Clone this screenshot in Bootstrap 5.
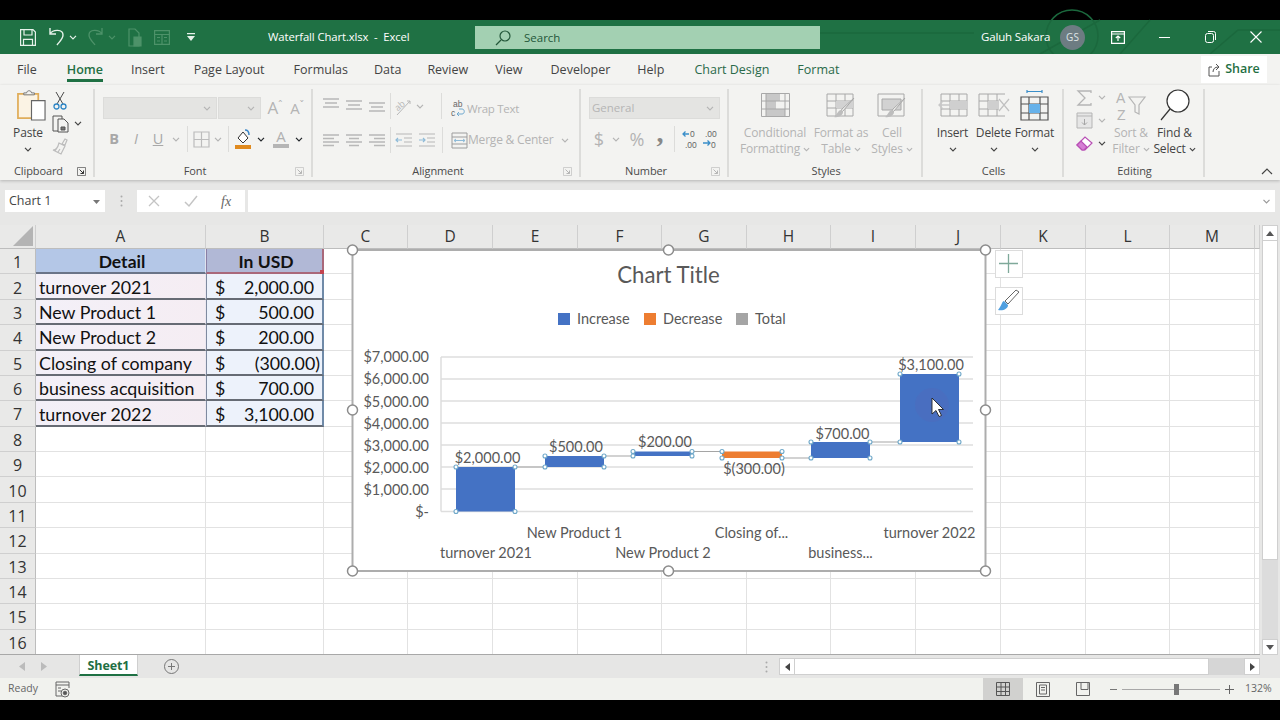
<!DOCTYPE html>
<html lang="en">
<head>
<meta charset="UTF-8">
<title>Waterfall Chart.xlsx - Excel</title>
<meta name="viewport" content="width=device-width, initial-scale=1">
<link href="https://cdn.jsdelivr.net/npm/bootstrap@5.3.0/dist/css/bootstrap.min.css" rel="stylesheet">
<style>
  html, body { height: 720px; overflow: hidden; background: #000; }
  body { font-family: "Open Sans", "Noto Sans", sans-serif; font-size: 12px; color: #444; }
  svg { display: block; flex: none; overflow: visible; }
  .app { padding-top: 20px; height: 700px; width: 1280px; }

  /* title bar */
  .tbar { height: 34px; background: #1f7144; color: #fff; position: relative; flex: none; }
  .tbar > div { flex: none; }
  .tbar-bg { position: absolute; left: 820px; top: 0; }
  .qat { width: 268px; padding-left: 20px; }
  .q-undo { margin-left: 13px; } .q-c1 { margin-left: 5px; } .q-redo { margin-left: 11px; } .q-c2 { margin-left: 5px; }
  .q-doc { margin-left: 12px; } .q-tbl { margin-left: 12px; } .q-drop { margin-left: 16px; }
  .doc-title { width: 207px; font-size: 11.3px; letter-spacing: -.1px; white-space: pre; }
  .searchbox { width: 345px; height: 23px; margin-top: 1px; background: #a3d0b2; color: #24573a; padding-left: 20px; gap: 13px; font-size: 11.5px; }
  .user { margin-left: 161px; font-size: 11.5px; letter-spacing: -.15px; width: 79px; white-space: nowrap; position: relative; }
  .avatar { width: 25px; height: 25px; border-radius: 50%; background: #6d7c82; color: #dfe5e6; font-size: 10px; position: relative; margin-right: 10px; }
  .winbtn { width: 46px; position: relative; }

  /* tabs */
  .tabrow { height: 31px; background: #f3f3f1; color: #444; font-size: 12.5px; position: relative; flex: none; padding-left: 17px; }
  .tab { position: relative; white-space: nowrap; line-height: 31px; }
  .tab-on { font-weight: 600; color: #1f6f43; }
  .tab-on::after { content: ""; position: absolute; left: 0; right: 0; bottom: 3px; height: 3px; background: #1f7144; }
  .tab-ctx { color: #2a6a4a; }
  .tab-file { margin-right: 30px; } .tab-home { margin-right: 28px; } .tab-ins { margin-right: 29px; } .tab-pl { margin-right: 29px; }
  .tab-fm { margin-right: 26px; } .tab-da { margin-right: 26px; } .tab-re { margin-right: 27px; }
  .tab-vi { margin-right: 28px; } .tab-de { margin-right: 27px; } .tab-he { margin-right: 30px; } .tab-cd { margin-right: 28px; }
  .sharebtn { position: absolute; right: 13px; top: 2px; width: 66px; height: 27px; background: #fff; color: #1f6f43; font-weight: 600; gap: 4px; font-size: 12.5px; }

  /* ribbon */
  .ribbon { height: 95px; background: #f3f3f1; box-shadow: 0 1px 3px rgba(0,0,0,.22); position: relative; z-index: 2; flex: none; }
  .grp { height: 95px; position: relative; flex: none; }
  .grp::after { content: ""; position: absolute; right: 0; top: 4px; bottom: 3px; width: 2px; background: #dcdcda; }
  .grp-body { height: 79px; }
  .grp-label { height: 15px; font-size: 11px; color: #4a4a4a; line-height: 14px; letter-spacing: -.1px; }
  .launch { width: 18px; }
  .g-clip { width: 95px; } .g-font { width: 218px; } .g-align { width: 268px; } .g-num { width: 148px; }
  .g-style { width: 194px; } .g-cells { width: 141px; } .g-edit { width: 141px; }
  .rrow { display: flex; align-items: center; }
  .cell-i { display: flex; align-items: center; justify-content: center; flex: none; height: 100%; }
  .w10 { width: 10px; } .w12 { width: 12px; } .w14 { width: 14px; } .w18 { width: 18px; } .w20 { width: 20px; } .w22 { width: 22px; } .w24 { width: 24px; } .w28 { width: 28px; }
  .vsep { width: 1px; height: 26px; background: #dcdcda; flex: none; margin: 0 2px; }
  .combo { height: 22px; background: #e4e4e2; border: 1px solid #dcdcda; flex: none; padding-right: 5px; color: #b5b5b5; }
  .c-font { width: 114px; margin-right: 1px; } .c-size { width: 43px; margin-right: 1px; } .c-num { width: 131px; padding-left: 2px; font-size: 11.5px; }
  .dis { color: #b4b4b4; }
  .bigbtn { display: flex; flex-direction: column; align-items: center; flex: none; text-align: center; line-height: 16px; white-space: nowrap; letter-spacing: -.15px; }
  .bigbtn .ico { height: 40px; display: flex; align-items: center; justify-content: center; }
  .bigbtn .lh { height: 16px; display: flex; align-items: center; justify-content: center; gap: 3px; }
  .b-paste { width: 42px; margin-left: 7px; }
  .paste-ico { margin-left: 6px; }
  .b-cond { width: 72px; } .b-tbl { width: 60px; } .b-cell { width: 42px; }
  .b-cellop { width: 41px; } .b-sort { width: 46px; } .b-find { width: 41px; }
  .pad-s { padding-left: 10px; } .pad-c { padding-left: 9px; } .pad-e { padding-left: 10px; }
  .small-col { width: 34px; flex: none; }
  .small-col .rrow { height: 23px; }
  .clip-col { margin-left: 1px; padding-top: 4px; }
  .font-body { padding: 12px 0 0 8px; }
  .r-top { height: 22px; } .r-bot { height: 26px; margin-top: 7px; }
  .fs-a { font-size: 17px; margin-left: 2px; } .fs-b { font-size: 15px; }
  .fs-a sup, .fs-b sup { font-size: 10px; top: -.35em; }
  .bi-t { font-size: 14.5px; color: #a8a8a8; }
  .sep-b { margin: 0 3px 0 4px; } .sep-f { margin: 0 3px; } .w-col { margin-left: 2px; }
  .align-body { padding: 8px 0 0 7px; }
  .a-row { height: 26px; margin-bottom: 8px; }
  .va-t svg { margin-top: -2px; } .va-m svg { margin-top: 2px; } .va-b svg { margin-top: 6px; }
  .sep-a1 { margin: 0 2px 0 16px; } .sep-a2 { margin: 0 2px 0 3px; }
  .a-ico { margin-left: 5px; }
  .a-wrapico { margin-top: 4px; }
  .a-text { letter-spacing: -.1px; white-space: nowrap; }
  .a-wrap { font-size: 11.5px; letter-spacing: -.3px; margin-top: 5px; }
  .a-merge { letter-spacing: -.2px; }
  .a-mchev { margin-left: 5px; }
  .num-body { padding: 12px 0 0 8px; }
  .n-row { height: 26px; margin-top: 7px; }
  .n-sym { font-size: 18px; }
  .n-comma { font-family: "Liberation Serif", serif; font-size: 28px; font-weight: 700; color: #888; margin-top: -12px; }
  .sep-n { margin: 0 5px; }
  .dec-t { font-family: "Liberation Sans", sans-serif; font-size: 8.5px; fill: #666; }
  .sort-t { font-family: "Liberation Sans", sans-serif; font-size: 14px; fill: #b5b5b5; }
  .edit-col { width: 34px; }
  .edit-col .rrow:first-child { margin-top: 1px; }
  .collapse-box { padding: 0 7px 5px 0; }

  /* formula bar */
  .fbar { height: 45px; background: #e7e7e6; padding: 10px 5px 0; flex: none; }
  .fbox { height: 22px; background: #fff; flex: none; }
  .f-name { width: 100px; padding: 1px 5px 0 4px; font-size: 12.5px; color: #444; }
  .f-dots { width: 32px; height: 22px; color: #999; }
  .f-fx { width: 108px; }
  .f-input { flex: 1; margin-left: 3px; justify-content: flex-end; padding-right: 4px; }
  .fx-x { margin-left: 11px; } .fx-c { margin-left: 24px; }
  .fx-f { margin-left: 23px; font-family: "Liberation Serif", serif; font-size: 14px; color: #666; }

  /* sheet */
  .sheetrow { height: 430px; flex: none; }
  .sheetpane { width: 1260px; height: 430px; position: relative; overflow: hidden; background: #fff; border-bottom: 1px solid #a8a8a8; }
  .cellgrid { display: grid; grid-template-columns: 36px 170px 118px 84px 85px 85px 84px 85px 84px 85px 85px 85px 84px 85px 5px; grid-template-rows: 24px repeat(16, 25.375px); font-family: Lato, "Open Sans", sans-serif; }
  .gc { border-right: 1px solid #e2e2e2; border-bottom: 1px solid #e2e2e2; font-size: 17.8px; color: #111; display: flex; align-items: center; white-space: nowrap; padding: 2px 0 0 3px; min-width: 0; }
  .ch { background: #e9e9e8; font-family: "Open Sans", sans-serif; font-size: 15.5px; color: #333; justify-content: center; padding: 0; border-right-color: #cfcfcf; border-bottom-color: #bdbdbd; }
  .rh { background: #e9e9e8; font-family: "Open Sans", sans-serif; font-size: 16px; color: #333; justify-content: center; padding: 2px 0 0; border-right-color: #bdbdbd; border-bottom-color: #cfcfcf; }
  .corner { background: #e9e9e8; position: relative; border-right-color: #cfcfcf; border-bottom-color: #bdbdbd; padding: 0; }
  .corner::after { content: ""; position: absolute; right: 2px; bottom: 2px; border-style: solid; border-width: 0 0 20px 20px; border-color: transparent transparent #b4b4b4 transparent; }
  .hd-a { background: #b4c7e7; font-weight: 700; font-size: 17.5px; justify-content: center; border-bottom: 2px solid #6a7488; border-right: 1px solid #dfe3ee; }
  .hd-b { background: #b1b8d6; font-weight: 700; font-size: 17.5px; justify-content: center; border-bottom: 2px solid #a9687a; border-right: 2px solid #a9687a; border-left: 1px solid #8a7fa5; position: relative; }
  .hd-b::after { content: ""; position: absolute; right: -2px; bottom: -2px; width: 4px; height: 4px; background: #c2434f; }
  .da { background: linear-gradient(90deg, #f3f0f8, #f5edf3); border-bottom: 2px solid #666b74; border-right: 1px solid #ece8f0; }
  .db { background: #edf2fb; border-bottom: 2px solid #666b74; border-right: 2px solid #6f8aa8; border-left: 1px solid #7f8aa0; justify-content: space-between; padding: 2px 8px 0; }
  .neg { margin-right: -6px; }
  .chartlay { position: absolute; left: 340px; top: 15px; }
  .chartlay text { font-family: Lato, "Open Sans", sans-serif; fill: #595959; }

  .vscroll { width: 20px; height: 430px; background: #e7e7e6; padding: 0 2px; }
  .sb-btn { background: #fff; border: 1px solid #cfcfcf; height: 16px; flex: none; }
  .vthumb { height: 319px; background: #fff; border: 1px solid #cfcfcf; border-top: 0; flex: none; }
  .vtrack { flex: 1; background: #dcdcdc; }

  /* sheet tabs */
  .tabbar { height: 23px; background: #e6e6e5; position: relative; flex: none; }
  .tabnav { width: 79px; padding-left: 19px; gap: 16px; flex: none; }
  .sheettab { width: 59px; height: 21px; padding-top: 3px; background: #fff; color: #1f6f43; font-weight: 700; font-size: 12.5px; border-bottom: 2px solid #1f7144; border-left: 1px solid #cfcfcf; border-right: 1px solid #cfcfcf; letter-spacing: -.1px; flex: none; }
  .addsheet { margin-left: 26px; }
  .hscroll { margin-left: auto; width: 520px; padding-right: 20px; flex: none; }
  .h-grip { width: 19px; color: #999; flex: none; justify-content: flex-start; padding-left: 5px; }
  .h-btn { width: 16px; height: 17px; background: #fff; border: 1px solid #cfcfcf; flex: none; }
  .h-thumb { width: 414px; height: 17px; background: #fff; border: 1px solid #cfcfcf; border-left: 0; flex: none; }
  .h-track { width: 35px; height: 17px; background: #d6d6d6; flex: none; }

  /* status bar */
  .statusbar { height: 22px; background: #f1f2ee; font-size: 10.5px; color: #666; flex: none; }
  .st-left { padding-left: 8px; gap: 17px; }
  .vbtn { width: 40px; height: 22px; flex: none; }
  .vbtn-on { background: #d1d1cf; }
  .zoombar { margin-left: 7px; padding-right: 7px; }
  .zslider { width: 98px; height: 1px; background: #a8a8a8; position: relative; margin: 0 5px; }
  .zslider::before { content: ""; position: absolute; left: 52px; top: -5px; width: 5px; height: 11px; background: #777; }
  .zpct { margin-left: 11px; width: 28px; white-space: nowrap; }
</style>
</head>
<body>

<svg width="0" height="0" class="position-absolute">
  <defs>
    <symbol id="chev" viewBox="0 0 8 5"><path d="M1 .8l3 3 3-3" fill="none" stroke="currentColor" stroke-width="1.2"/></symbol>
    <symbol id="launcher" viewBox="0 0 9 9"><path d="M.5 .5h8v8h-8z" fill="none" stroke="currentColor" stroke-width=".9" opacity=".65"/><path d="M2.5 2.5l4 4M3.5 6.5h3v-3" fill="none" stroke="currentColor"/></symbol>
    <symbol id="lines3" viewBox="0 0 18 18"><path d="M1 3h16M3 7h12M1 11h16" fill="none" stroke="currentColor" stroke-width="1.4"/></symbol>
  </defs>
</svg>

<div class="app d-flex flex-column">

  <!-- Title bar -->
  <div class="tbar d-flex align-items-center">
    <svg class="tbar-bg" width="460" height="34" viewBox="0 0 460 34"><g fill="none" stroke="#1b683d" stroke-width="1.5"><path d="M0 13h146l8 0M300 34l30-34M390 34l28-24h42M280 0l-60 34"/><circle cx="252" cy="16" r="26"/></g></svg>
    <div class="qat d-flex align-items-center position-relative">
      <svg width="16" height="17" viewBox="0 0 16 17" fill="none" stroke="#e6f2ea" stroke-width="1.2"><path d="M.6 .6h12.400l2.400 2.400v13.400H.6zM4 .6v5.400h8V.6M3.500 16.400v-6h9v6"/></svg>
      <svg class="q-undo" width="15" height="20" viewBox="0 0 15 20" fill="none" stroke="#e6f2ea" stroke-width="1.4"><path d="M1 1v6h6M1 7c3-5 13-5 13 1 0 4-4 7-6 10"/></svg>
      <svg class="q-c1" width="8" height="5" color="#e6f2ea"><use href="#chev"/></svg>
      <svg class="q-redo" width="15" height="20" viewBox="0 0 15 20" fill="none" stroke="#4d9269" stroke-width="1.3"><path d="M14 1v6H8M14 7C11 2 1 2 1 8c0 4 4 7 6 10"/></svg>
      <svg class="q-c2" width="8" height="5" color="#4d9269"><use href="#chev"/></svg>
      <svg class="q-doc" width="14" height="19" viewBox="0 0 14 19" fill="none" stroke="#4d9269" stroke-width="1.2"><path d="M1 1h6l4 4v13H1z"/><path d="M6 9h7v9H6z" fill="#4d9269"/></svg>
      <svg class="q-tbl" width="16" height="15" viewBox="0 0 16 15" fill="none" stroke="#4d9269" stroke-width="1.2"><path d="M.6 .6h14.800v13.800H.6zM.6 4.500h14.800M8 4.500v10M3 7.500h3M10 7.500h3M3 11h3M10 11h3"/></svg>
      <svg class="q-drop" width="10" height="10" viewBox="0 0 10 10" fill="#e6f2ea"><path d="M1 1h8v1.200H1zM1 4h8L5 9z"/></svg>
    </div>
    <div class="doc-title position-relative">Waterfall Chart.xlsx  -  Excel</div>
    <div class="searchbox d-flex align-items-center position-relative">
      <svg width="16" height="16" viewBox="0 0 16 16" fill="none" stroke="#24573a" stroke-width="1.2"><circle cx="10" cy="6" r="5"/><path d="M6 10l-5 5"/></svg>
      <span>Search</span>
    </div>
    <div class="user">Galuh Sakara</div>
    <div class="avatar d-flex align-items-center justify-content-center">GS</div>
    <div class="winbtn d-flex justify-content-center"><svg width="14" height="13" viewBox="0 0 14 13" fill="none" stroke="#fff" stroke-width="1.2"><path d="M.6 .6h12.800v11.800H.6zM.6 3h12.800M7 10V5M4.800 7L7 5l2.200 2"/></svg></div>
    <div class="winbtn d-flex justify-content-center"><svg width="11" height="11" viewBox="0 0 11 11" stroke="#fff"><path d="M0 5.500h11"/></svg></div>
    <div class="winbtn d-flex justify-content-center"><svg width="11" height="12" viewBox="0 0 11 12" fill="none" stroke="#fff"><rect x=".5" y="2.500" width="8" height="9" rx="2"/><path d="M3 .5h5.500a2 2 0 0 1 2 2V9"/></svg></div>
    <div class="winbtn d-flex justify-content-center"><svg width="12" height="12" viewBox="0 0 12 12" stroke="#fff" stroke-width="1.100"><path d="M.5 .5l11 11M11.500 .5l-11 11"/></svg></div>
  </div>

  <!-- Tabs -->
  <div class="tabrow d-flex">
    <span class="tab tab-file">File</span>
    <span class="tab tab-on tab-home">Home</span>
    <span class="tab tab-ins">Insert</span>
    <span class="tab tab-pl">Page Layout</span>
    <span class="tab tab-fm">Formulas</span>
    <span class="tab tab-da">Data</span>
    <span class="tab tab-re">Review</span>
    <span class="tab tab-vi">View</span>
    <span class="tab tab-de">Developer</span>
    <span class="tab tab-he">Help</span>
    <span class="tab tab-ctx tab-cd">Chart Design</span>
    <span class="tab tab-ctx tab-fo">Format</span>
    <div class="sharebtn d-flex align-items-center justify-content-center">
      <svg width="13" height="14" viewBox="0 0 13 14" fill="none" stroke="#555" stroke-width="1"><path d="M4 4H1v9h10V8M5 9c0-3 2-5 5-5M8 1l3 3-3 3"/></svg>
      <span>Share</span>
    </div>
  </div>

  <!-- Ribbon -->
  <div class="ribbon d-flex">

    <div class="grp g-clip d-flex flex-column">
      <div class="grp-body d-flex">
        <div class="bigbtn b-paste">
          <div class="ico"><svg class="paste-ico" width="29" height="30" viewBox="0 0 30 31" fill="none"><path d="M1 4h21v25H1z" fill="#fbf3e4" stroke="#e0ad5a" stroke-width="1.800"/><path d="M7 5V3h3c0-3 5-3 5 0h3v2z" fill="#f3f3f1" stroke="#777"/><path d="M15 11h14v20H15z" fill="#fff" stroke="#666" stroke-width="1.200"/></svg></div>
          <div class="lh">Paste</div>
          <div class="lh"><svg width="8" height="5"><use href="#chev"/></svg></div>
        </div>
        <div class="small-col clip-col">
          <div class="rrow"><span class="cell-i w20"><svg width="14" height="19" viewBox="0 0 14 19" fill="none" stroke="#4a4a4a"><path d="M3 1l7 12M11 1L4 13"/><circle cx="3.500" cy="15.500" r="2.500" stroke="#2f86c5" stroke-width="1.300"/><circle cx="10.500" cy="15.500" r="2.500" stroke="#2f86c5" stroke-width="1.300"/></svg></span></div>
          <div class="rrow"><span class="cell-i w20"><svg width="17" height="18" viewBox="0 0 17 18" fill="#f3f3f1" stroke="#555"><path d="M1 1h9v15H1z"/><path d="M6 4h6l4 4v9H6z"/><path d="M9 12h4v3H9z" fill="#777"/></svg></span><svg class="ms-1" width="8" height="5"><use href="#chev"/></svg></div>
          <div class="rrow"><span class="cell-i w20"><svg width="16" height="17" viewBox="0 0 16 17" fill="none" stroke="#bcbcbc" stroke-width="1.200"><path d="M10 6l3-5 2 1-2 5zM7 5l6 3-4 8-8-4c3 0 5-3 6-7zM5 10l-2 3M8 11l-2 3"/></svg></span></div>
        </div>
      </div>
      <div class="grp-label d-flex"><span class="flex-grow-1 text-center">Clipboard</span><span class="launch d-flex align-items-center"><svg width="9" height="9" color="#333"><use href="#launcher"/></svg></span></div>
    </div>

    <div class="grp g-font d-flex flex-column">
      <div class="grp-body font-body">
        <div class="rrow r-top">
          <div class="combo c-font d-flex align-items-center justify-content-end"><svg width="8" height="5"><use href="#chev"/></svg></div>
          <div class="combo c-size d-flex align-items-center justify-content-end"><svg width="8" height="5"><use href="#chev"/></svg></div>
          <span class="cell-i w22 fs-a dis">A<sup>ˆ</sup></span>
          <span class="cell-i w22 fs-b dis">A<sup>ˇ</sup></span>
        </div>
        <div class="rrow r-bot dis">
          <span class="cell-i w22 bi-t fw-bold">B</span>
          <span class="cell-i w22 bi-t fst-italic">I</span>
          <span class="cell-i w22 bi-t text-decoration-underline">U</span>
          <span class="cell-i w14"><svg width="8" height="5"><use href="#chev"/></svg></span>
          <span class="vsep sep-b"></span>
          <span class="cell-i w20"><svg width="17" height="17" viewBox="0 0 17 17" fill="none" stroke="#bcbcbc" stroke-width="1.200"><path d="M1 1h15v15H1zM8.500 1v15M1 8.500h15"/></svg></span>
          <span class="cell-i w14"><svg width="8" height="5"><use href="#chev"/></svg></span>
          <span class="vsep sep-f"></span>
          <span class="cell-i w22"><svg width="20" height="22" viewBox="0 0 20 22" fill="none" stroke="#333"><path d="M5 10l5-6 5 6-5 5z" fill="#fff"/><path d="M12 2c3 0 4 2 4 5" stroke="#3a86c8" stroke-width="1.500"/><path d="M2 17h16v4H2z" fill="#e08a1e" stroke="none"/></svg></span>
          <span class="cell-i w14 text-dark"><svg width="8" height="5"><use href="#chev"/></svg></span>
          <span class="cell-i w22 w-col"><svg width="18" height="20" viewBox="0 0 18 20"><text x="9" y="13" font-size="15" text-anchor="middle" fill="#b0b0b0" font-family="Open Sans">A</text><path d="M1 15h16v4H1z" fill="#b5b5b5"/></svg></span>
          <span class="cell-i w14 text-dark"><svg width="8" height="5"><use href="#chev"/></svg></span>
        </div>
      </div>
      <div class="grp-label d-flex"><span class="flex-grow-1 text-center">Font</span><span class="launch d-flex align-items-center"><svg width="9" height="9" color="#b5b5b5"><use href="#launcher"/></svg></span></div>
    </div>

    <div class="grp g-align d-flex flex-column">
      <div class="grp-body align-body">
        <div class="rrow a-row dis">
          <span class="cell-i w22 va-t"><svg width="18" height="18" color="#b8b8b8"><use href="#lines3"/></svg></span>
          <span class="cell-i w24 va-m"><svg width="18" height="18" color="#b8b8b8"><use href="#lines3"/></svg></span>
          <span class="cell-i w22 va-b"><svg width="18" height="18" color="#b8b8b8"><use href="#lines3"/></svg></span>
          <span class="vsep"></span>
          <span class="cell-i w22"><svg width="20" height="19" viewBox="0 0 20 19" fill="none" stroke="#b8b8b8"><text x="1" y="11" font-size="9" fill="#b8b8b8" stroke="none" font-family="Open Sans" transform="rotate(-40 7 9)">ab</text><path d="M3 18L16 4M13 4h3v3"/></svg></span>
          <span class="cell-i w10"><svg width="8" height="5"><use href="#chev"/></svg></span>
          <span class="vsep sep-a1"></span>
          <span class="cell-i w18 a-ico a-wrapico"><svg width="16" height="19" viewBox="0 0 16 19"><text x="3" y="8" class="dec-t" fill="#777">ab</text><text x="1" y="17" class="dec-t" fill="#777">c</text><path d="M7 15h5c3 0 3-5 0-5h-3M7 15l2-2M7 15l2 2" fill="none" stroke="#6fa9cf"/></svg></span>
          <span class="a-text a-wrap">Wrap Text</span>
        </div>
        <div class="rrow a-row dis">
          <span class="cell-i w22"><svg width="18" height="14" viewBox="0 0 18 14" stroke="#b8b8b8" stroke-width="1.300"><path d="M1 2h16M1 5.500h11M1 9h16M1 12.500h11"/></svg></span>
          <span class="cell-i w24"><svg width="18" height="14" viewBox="0 0 18 14" stroke="#b8b8b8" stroke-width="1.300"><path d="M1 2h16M4 5.500h10M1 9h16M4 12.500h10"/></svg></span>
          <span class="cell-i w22"><svg width="18" height="14" viewBox="0 0 18 14" stroke="#b8b8b8" stroke-width="1.300"><path d="M1 2h16M6 5.500h11M1 9h16M6 12.500h11"/></svg></span>
          <span class="vsep"></span>
          <span class="cell-i w22"><svg width="18" height="14" viewBox="0 0 18 14" fill="none" stroke="#b8b8b8" stroke-width="1.200"><path d="M1 1h16M9 5h8M9 9h8M1 13h16"/><path d="M7 7H1M3 5L1 7l2 2" stroke="#8fbbd8"/></svg></span>
          <span class="cell-i w24"><svg width="18" height="14" viewBox="0 0 18 14" fill="none" stroke="#b8b8b8" stroke-width="1.200"><path d="M1 1h16M9 5h8M9 9h8M1 13h16"/><path d="M1 7h6M5 5l2 2-2 2" stroke="#8fbbd8"/></svg></span>
          <span class="vsep sep-a2"></span>
          <span class="cell-i w18 a-ico"><svg width="17" height="17" viewBox="0 0 17 17" fill="none" stroke="#9d9d9d"><path d="M1 1h15v15H1zM1 5h15M1 12h15"/><path d="M3 8.500h11M5 7l-2 1.500L5 10M12 7l2 1.500-2 1.500" stroke="#8fbbd8"/></svg></span>
          <span class="a-text a-merge">Merge &amp; Center</span>
          <span class="cell-i w14 a-mchev"><svg width="8" height="5"><use href="#chev"/></svg></span>
        </div>
      </div>
      <div class="grp-label d-flex"><span class="flex-grow-1 text-center">Alignment</span><span class="launch d-flex align-items-center"><svg width="9" height="9" color="#b5b5b5"><use href="#launcher"/></svg></span></div>
    </div>

    <div class="grp g-num d-flex flex-column">
      <div class="grp-body num-body">
        <div class="combo c-num d-flex align-items-center justify-content-between"><span>General</span><svg width="8" height="5"><use href="#chev"/></svg></div>
        <div class="rrow n-row dis">
          <span class="cell-i w20 n-sym">$</span>
          <span class="cell-i w14"><svg width="8" height="5"><use href="#chev"/></svg></span>
          <span class="cell-i w28 n-sym">%</span>
          <span class="cell-i w18 n-comma">,</span>
          <span class="vsep sep-n"></span>
          <span class="cell-i w20"><svg width="16" height="20" viewBox="0 0 16 20"><text x="8" y="8" class="dec-t">0</text><text x="3" y="18.500" class="dec-t">.00</text><path d="M7 5H1M3.500 2.500L1 5l2.500 2.500" fill="none" stroke="#3a8ec9" stroke-width="1.300"/></svg></span>
          <span class="cell-i w20"><svg width="16" height="20" viewBox="0 0 16 20"><text x="3" y="8" class="dec-t">.00</text><text x="9" y="18.500" class="dec-t">0</text><path d="M1 14h7M5.500 11.500L8 14l-2.500 2.500" fill="none" stroke="#3a8ec9" stroke-width="1.300"/></svg></span>
        </div>
      </div>
      <div class="grp-label d-flex"><span class="flex-grow-1 text-center">Number</span><span class="launch d-flex align-items-center"><svg width="9" height="9" color="#b5b5b5"><use href="#launcher"/></svg></span></div>
    </div>

    <div class="grp g-style d-flex flex-column">
      <div class="grp-body d-flex pad-s dis">
        <div class="bigbtn b-cond">
          <div class="ico"><svg width="29" height="24" viewBox="0 0 29 24" fill="none" stroke="#a8a8a8"><path d="M.5 .5h28v23H.5z" fill="#f3f3f1"/><path d="M5 1h14v7h-14zM5 8h10v8H5zM5 16h19v7H5z" fill="#c8c8c8" stroke="none"/><path d="M.5 8h28M.5 16h28M5 .5v23M24 .5v23"/></svg></div>
          <div class="lh">Conditional</div>
          <div class="lh">Formatting<svg width="7" height="5"><use href="#chev"/></svg></div>
        </div>
        <div class="bigbtn b-tbl">
          <div class="ico"><svg width="30" height="25" viewBox="0 0 30 25" fill="none" stroke="#a8a8a8"><path d="M1 1h26v22H1zM1 8h26M1 15h26M10 1v22M19 1v22"/><path d="M10 8h17v7H10z" fill="#d2d2d2" stroke="none"/><path d="M28 5L17 18l-3 2 2-4z" fill="#f3f3f1"/><path d="M15 17c-3 0-4 5-7 7 5 1 9-2 9-5" fill="#bdbdbd" stroke="none"/></svg></div>
          <div class="lh">Format as</div>
          <div class="lh">Table<svg width="7" height="5"><use href="#chev"/></svg></div>
        </div>
        <div class="bigbtn b-cell">
          <div class="ico"><svg width="30" height="25" viewBox="0 0 30 25" fill="none" stroke="#a8a8a8"><path d="M1 1h26v22H1z"/><path d="M5 6h19v11H5z" fill="#d2d2d2"/><path d="M28 5L17 18l-3 2 2-4z" fill="#f3f3f1"/><path d="M15 17c-3 0-4 5-7 7 5 1 9-2 9-5" fill="#bdbdbd" stroke="none"/></svg></div>
          <div class="lh">Cell</div>
          <div class="lh">Styles<svg width="7" height="5"><use href="#chev"/></svg></div>
        </div>
      </div>
      <div class="grp-label text-center">Styles</div>
    </div>

    <div class="grp g-cells d-flex flex-column">
      <div class="grp-body d-flex pad-c">
        <div class="bigbtn b-cellop">
          <div class="ico"><svg width="32" height="24" viewBox="0 0 32 24" fill="none" stroke="#a8a8a8"><path d="M4 1h26v22H4zM4 8h26M4 16h26M13 1v22M22 1v22"/><path d="M13 8h18v8H13z" fill="#cfcfcf" stroke="none"/><path d="M13 12H2M6 8l-4 4 4 4" stroke="#c8c8c8" stroke-width="1.400"/></svg></div>
          <div class="lh">Insert</div>
          <div class="lh"><svg width="8" height="5"><use href="#chev"/></svg></div>
        </div>
        <div class="bigbtn b-cellop">
          <div class="ico"><svg width="32" height="24" viewBox="0 0 32 24" fill="none" stroke="#a8a8a8"><path d="M1 1h26M1 23h26M1 1v22M1 8h20M1 16h20M10 1v22M19 1v22"/><path d="M10 8h11v8H10z" fill="#cfcfcf" stroke="none"/><path d="M21 6l10 12M31 6L21 18" stroke="#c0c0c0" stroke-width="1.200"/></svg></div>
          <div class="lh">Delete</div>
          <div class="lh"><svg width="8" height="5"><use href="#chev"/></svg></div>
        </div>
        <div class="bigbtn b-cellop">
          <div class="ico"><svg width="29" height="31" viewBox="0 0 29 31" fill="none" stroke="#555" stroke-width="1.200"><path d="M7 1.500h15M7 0v3M22 0v3" stroke="#3a8ec9"/><path d="M1 7h27v23H1zM1 14h27M1 23h27M9 7v23M20 7v23"/><path d="M9 14h11v9H9z" fill="#67b2ea" stroke="none"/></svg></div>
          <div class="lh">Format</div>
          <div class="lh"><svg width="8" height="5"><use href="#chev"/></svg></div>
        </div>
      </div>
      <div class="grp-label text-center">Cells</div>
    </div>

    <div class="grp g-edit d-flex flex-column">
      <div class="grp-body d-flex pad-e">
        <div class="small-col edit-col">
          <div class="rrow"><span class="cell-i w20"><svg width="15" height="16" viewBox="0 0 15 16" fill="none" stroke="#b5b5b5" stroke-width="1.300"><path d="M14 3V1H1l7 7-7 7h13v-2"/></svg></span><span class="ms-1 dis"><svg width="8" height="5"><use href="#chev"/></svg></span></div>
          <div class="rrow"><span class="cell-i w20"><svg width="17" height="17" viewBox="0 0 17 17" fill="#e6e6e6" stroke="#b5b5b5"><path d="M1 1h15v15H1z"/><path d="M1 4h15" /><path d="M8.500 7v6M6 10.500l2.500 2.500 2.500-2.500" fill="none" stroke="#a5a5a5"/></svg></span><span class="ms-1 dis"><svg width="8" height="5"><use href="#chev"/></svg></span></div>
          <div class="rrow"><span class="cell-i w20"><svg width="17" height="15" viewBox="0 0 17 15" fill="none" stroke="#b84fb5" stroke-width="1.200"><path d="M1 9l8-8 7 6-7 7H6z" fill="#fff"/><path d="M1 9l4-4 6 6-3 3H6z" fill="#d57fd4"/></svg></span><span class="ms-1"><svg width="8" height="5"><use href="#chev"/></svg></span></div>
        </div>
        <div class="bigbtn b-sort dis">
          <div class="ico"><svg width="30" height="29" viewBox="0 0 30 29"><text x="0" y="12" class="sort-t">A</text><text x="1" y="28.500" class="sort-t">Z</text><path d="M13 6h16l-6 8v9l-4-2v-7z" fill="none" stroke="#b5b5b5" stroke-width="1.200"/></svg></div>
          <div class="lh">Sort &amp;</div>
          <div class="lh">Filter<svg width="7" height="5"><use href="#chev"/></svg></div>
        </div>
        <div class="bigbtn b-find">
          <div class="ico"><svg width="30" height="32" viewBox="0 0 30 32" fill="none" stroke="#333" stroke-width="1.200"><circle cx="18" cy="12" r="11" fill="#fff"/><path d="M10 20L1 31"/></svg></div>
          <div class="lh">Find &amp;</div>
          <div class="lh">Select<svg width="7" height="5"><use href="#chev"/></svg></div>
        </div>
      </div>
      <div class="grp-label text-center">Editing</div>
    </div>

    <div class="flex-grow-1 d-flex align-items-end justify-content-end collapse-box">
      <svg width="12" height="7" viewBox="0 0 12 7" fill="none" stroke="#444" stroke-width="1.200"><path d="M1 6l5-5 5 5"/></svg>
    </div>
  </div>

  <!-- Formula bar -->
  <div class="fbar d-flex">
    <div class="fbox f-name d-flex align-items-center justify-content-between"><span>Chart 1</span><svg width="7" height="4" viewBox="0 0 7 4" fill="#777"><path d="M0 0h7L3.500 4z"/></svg></div>
    <div class="f-dots d-flex align-items-center justify-content-center"><svg width="3" height="12" fill="#aaa"><circle cx="1.500" cy="1.500" r="1"/><circle cx="1.500" cy="6" r="1"/><circle cx="1.500" cy="10.500" r="1"/></svg></div>
    <div class="fbox f-fx d-flex align-items-center">
      <svg class="fx-x" width="12" height="12" viewBox="0 0 12 12" stroke="#c4c4c4" stroke-width="1.300"><path d="M1 1l10 10M11 1L1 11"/></svg>
      <svg class="fx-c" width="14" height="12" viewBox="0 0 14 12" fill="none" stroke="#c4c4c4" stroke-width="1.500"><path d="M1 7l4 4 8-10"/></svg>
      <span class="fx-f fst-italic">fx</span>
    </div>
    <div class="fbox f-input d-flex align-items-center"><svg width="9" height="5" color="#999"><use href="#chev"/></svg></div>
  </div>

  <!-- Sheet -->
  <div class="sheetrow d-flex">
    <div class="sheetpane">
      <div class="cellgrid" id="cellGrid"></div>
      <svg class="chartlay" width="700" height="350" viewBox="340 240 700 350">
        <rect x="352.500" y="250" width="633" height="321" fill="#fff" stroke="#adadad" stroke-width="2"/>
        <text x="668.500" y="283" font-size="22.200" text-anchor="middle">Chart Title</text>

        <rect x="558" y="313" width="12" height="12" fill="#4472c4"/>
        <text x="577" y="324" font-size="14.500">Increase</text>
        <rect x="644" y="313" width="12" height="12" fill="#ed7d31"/>
        <text x="663" y="324" font-size="14.500">Decrease</text>
        <rect x="736" y="313" width="12" height="12" fill="#a5a5a5"/>
        <text x="755" y="324" font-size="14.500">Total</text>

        <g stroke="#dedede" stroke-width="1.500">
          <path d="M441 357H973M441 379H973M441 401H973M441 423H973M441 445H973M441 467H973M441 489H973M441 511.500H973M441 357V511.500"/>
        </g>
        <g font-size="14.500" text-anchor="end">
          <text x="429" y="362">$7,000.00</text>
          <text x="429" y="384">$6,000.00</text>
          <text x="429" y="407">$5,000.00</text>
          <text x="429" y="429">$4,000.00</text>
          <text x="429" y="451">$3,000.00</text>
          <text x="429" y="473">$2,000.00</text>
          <text x="429" y="495">$1,000.00</text>
          <text x="429" y="517">$-</text>
        </g>

        <path d="M515 467H545M604 456H633M692 451.500H722M782 458H811M870 442H900" stroke="#a5a5a5" stroke-width="1.200"/>
        <rect x="456" y="467" width="59" height="44.500" fill="#4472c4"/>
        <rect x="545" y="456" width="59" height="11" fill="#4472c4"/>
        <rect x="633" y="451.500" width="59" height="4.500" fill="#4472c4"/>
        <rect x="722" y="451.500" width="60" height="6.500" fill="#ed7d31"/>
        <rect x="811" y="442" width="59" height="16" fill="#4472c4"/>
        <rect x="900" y="374" width="59" height="68" fill="#4472c4"/>

        <g fill="#fff" stroke="#6fa8c9" stroke-width="1.100">
          <circle cx="456" cy="467" r="2"/><circle cx="515" cy="467" r="2"/><circle cx="456" cy="511.500" r="2"/><circle cx="515" cy="511.500" r="2"/>
          <circle cx="545" cy="456" r="2"/><circle cx="604" cy="456" r="2"/><circle cx="545" cy="467" r="2"/><circle cx="604" cy="467" r="2"/>
          <circle cx="633" cy="451.500" r="2"/><circle cx="692" cy="451.500" r="2"/><circle cx="633" cy="456" r="2"/><circle cx="692" cy="456" r="2"/>
          <circle cx="722" cy="451.500" r="2"/><circle cx="782" cy="451.500" r="2"/><circle cx="722" cy="458" r="2"/><circle cx="782" cy="458" r="2"/>
          <circle cx="811" cy="442" r="2"/><circle cx="870" cy="442" r="2"/><circle cx="811" cy="458" r="2"/><circle cx="870" cy="458" r="2"/>
          <circle cx="900" cy="374" r="2"/><circle cx="959" cy="374" r="2"/><circle cx="900" cy="442" r="2"/><circle cx="959" cy="442" r="2"/>
        </g>

        <g font-size="14.500" text-anchor="middle">
          <text x="487.500" y="463">$2,000.00</text>
          <text x="576" y="452">$500.00</text>
          <text x="665" y="447">$200.00</text>
          <text x="754" y="474">$(300.00)</text>
          <text x="842.500" y="439">$700.00</text>
          <text x="931" y="370">$3,100.00</text>
          <text x="574.500" y="538">New Product 1</text>
          <text x="751.500" y="538">Closing of...</text>
          <text x="929.500" y="538">turnover 2022</text>
          <text x="486" y="558">turnover 2021</text>
          <text x="663" y="558">New Product 2</text>
          <text x="840.500" y="558">business...</text>
        </g>

        <g fill="#fff" stroke="#8c8c8c" stroke-width="1.500">
          <circle cx="352.500" cy="250" r="5"/><circle cx="668.500" cy="250" r="5"/><circle cx="985.500" cy="250" r="5"/>
          <circle cx="352.500" cy="410" r="5"/><circle cx="985.500" cy="410" r="5"/>
          <circle cx="352.500" cy="571" r="5"/><circle cx="668.500" cy="571" r="5"/><circle cx="985.500" cy="571" r="5"/>
        </g>

        <rect x="995.500" y="250.500" width="27" height="27" fill="#fff" stroke="#dcdcdc"/>
        <path d="M999 263.500H1018M1008.500 254V273" stroke="#7fa99a" stroke-width="1.300"/>
        <rect x="995.500" y="287.500" width="27" height="27" fill="#fff" stroke="#dcdcdc"/>
        <path d="M1019 292L1008 304l-3-3 11-11z" fill="#fff" stroke="#666"/>
        <path d="M1004 301c-2 0-2 4-6 9 5 1 10-1 10-5z" fill="#4f9fe0"/>

        <circle cx="932" cy="405" r="17" fill="#6a5fa8" opacity=".14"/>
        <path d="M932 398V414L936 410.500 939 416.500 941.500 415.500 938.500 409.500H943.500Z" fill="#fff" stroke="#222" stroke-width=".9"/>
      </svg>
    </div>
    <div class="vscroll d-flex flex-column">
      <div class="sb-btn d-flex align-items-center justify-content-center"><svg width="8" height="5" fill="#555"><path d="M0 5l4-5 4 5z"/></svg></div>
      <div class="vthumb"></div>
      <div class="vtrack"></div>
      <div class="sb-btn d-flex align-items-center justify-content-center"><svg width="8" height="5" fill="#555"><path d="M0 0l4 5 4-5z"/></svg></div>
    </div>
  </div>

  <!-- Sheet tabs -->
  <div class="tabbar d-flex align-items-start">
    <div class="tabnav d-flex align-items-center h-100">
      <svg width="6" height="9" fill="#bbb"><path d="M6 0L0 4.500 6 9z"/></svg>
      <svg width="6" height="9" fill="#bbb"><path d="M0 0l6 4.500L0 9z"/></svg>
    </div>
    <div class="sheettab d-flex align-items-center justify-content-center">Sheet1</div>
    <div class="addsheet h-100 d-flex align-items-center"><svg width="15" height="15" viewBox="0 0 15 15" fill="none" stroke="#777"><circle cx="7.500" cy="7.500" r="7"/><path d="M7.500 4v7M4 7.500h7"/></svg></div>
    <div class="hscroll d-flex align-items-center h-100">
      <div class="h-grip d-flex"><svg width="3" height="12" fill="#aaa"><circle cx="1.500" cy="1.500" r="1"/><circle cx="1.500" cy="6" r="1"/><circle cx="1.500" cy="10.500" r="1"/></svg></div>
      <div class="h-btn d-flex align-items-center justify-content-center"><svg width="5" height="8" fill="#444"><path d="M5 0L0 4l5 4z"/></svg></div>
      <div class="h-thumb"></div>
      <div class="h-track"></div>
      <div class="h-btn d-flex align-items-center justify-content-center"><svg width="5" height="8" fill="#444"><path d="M0 0l5 4-5 4z"/></svg></div>
    </div>
  </div>

  <!-- Status bar -->
  <div class="statusbar d-flex align-items-center">
    <div class="st-left d-flex align-items-center">
      <span>Ready</span>
      <svg width="15" height="17" viewBox="0 0 15 17" fill="none" stroke="#666"><path d="M1 1h13v3H1zM1 4v11h6M14 4v3M3 7h3M3 10h3"/><circle cx="10" cy="12" r="4"/><circle cx="10" cy="12" r="1.800" fill="#555"/></svg>
    </div>
    <div class="ms-auto d-flex align-items-center">
      <div class="vbtn vbtn-on d-flex align-items-center justify-content-center"><svg width="14" height="14" viewBox="0 0 14 14" fill="none" stroke="#555"><path d="M.5 .5h13v13H.5zM.5 5h13M.5 9.500h13M5 .5v13M9.500 .5v13"/></svg></div>
      <div class="vbtn d-flex align-items-center justify-content-center"><svg width="14" height="15" viewBox="0 0 14 15" fill="none" stroke="#666"><path d="M.5 .5h13v14H.5zM3.500 3h7v9h-7zM5 5.500h4M5 8h4"/></svg></div>
      <div class="vbtn d-flex align-items-center justify-content-center"><svg width="14" height="14" viewBox="0 0 14 14" fill="none" stroke="#666"><path d="M.5 .5h13v13H.5zM5 .5v7h7V.5"/></svg></div>
      <div class="zoombar d-flex align-items-center">
        <svg width="7" height="7" stroke="#777"><path d="M0 3.500h7"/></svg>
        <div class="zslider"></div>
        <svg width="9" height="9" stroke="#666"><path d="M0 4.500h9M4.500 0v9"/></svg>
        <span class="zpct">132%</span>
      </div>
    </div>
  </div>
</div>

<script src="https://cdn.jsdelivr.net/npm/bootstrap@5.3.0/dist/js/bootstrap.bundle.min.js"></script>
<script>
  // Build the worksheet cells
  const rows = [
    ['turnover 2021', '2,000.00'],
    ['New Product 1', '500.00'],
    ['New Product 2', '200.00'],
    ['Closing of company', '(300.00)'],
    ['business acquisition', '700.00'],
    ['turnover 2022', '3,100.00']
  ];
  const letters = ['A','B','C','D','E','F','G','H','I','J','K','L','M',''];
  let html = '<div class="gc corner"></div>';
  letters.forEach(l => { html += '<div class="gc ch">' + l + '</div>'; });
  for (let r = 1; r <= 16; r++) {
    html += '<div class="gc rh">' + r + '</div>';
    for (let c = 0; c < letters.length; c++) {
      if (r === 1 && c === 0) html += '<div class="gc hd-a">Detail</div>';
      else if (r === 1 && c === 1) html += '<div class="gc hd-b">In USD</div>';
      else if (r >= 2 && r <= 7 && c === 0) html += '<div class="gc da">' + rows[r - 2][0] + '</div>';
      else if (r >= 2 && r <= 7 && c === 1) {
        const v = rows[r - 2][1];
        html += '<div class="gc db"><span>$</span><span' + (v[0] === '(' ? ' class="neg"' : '') + '>' + v + '</span></div>';
      } else html += '<div class="gc"></div>';
    }
  }
  document.getElementById('cellGrid').innerHTML = html;
</script>
</body>
</html>
